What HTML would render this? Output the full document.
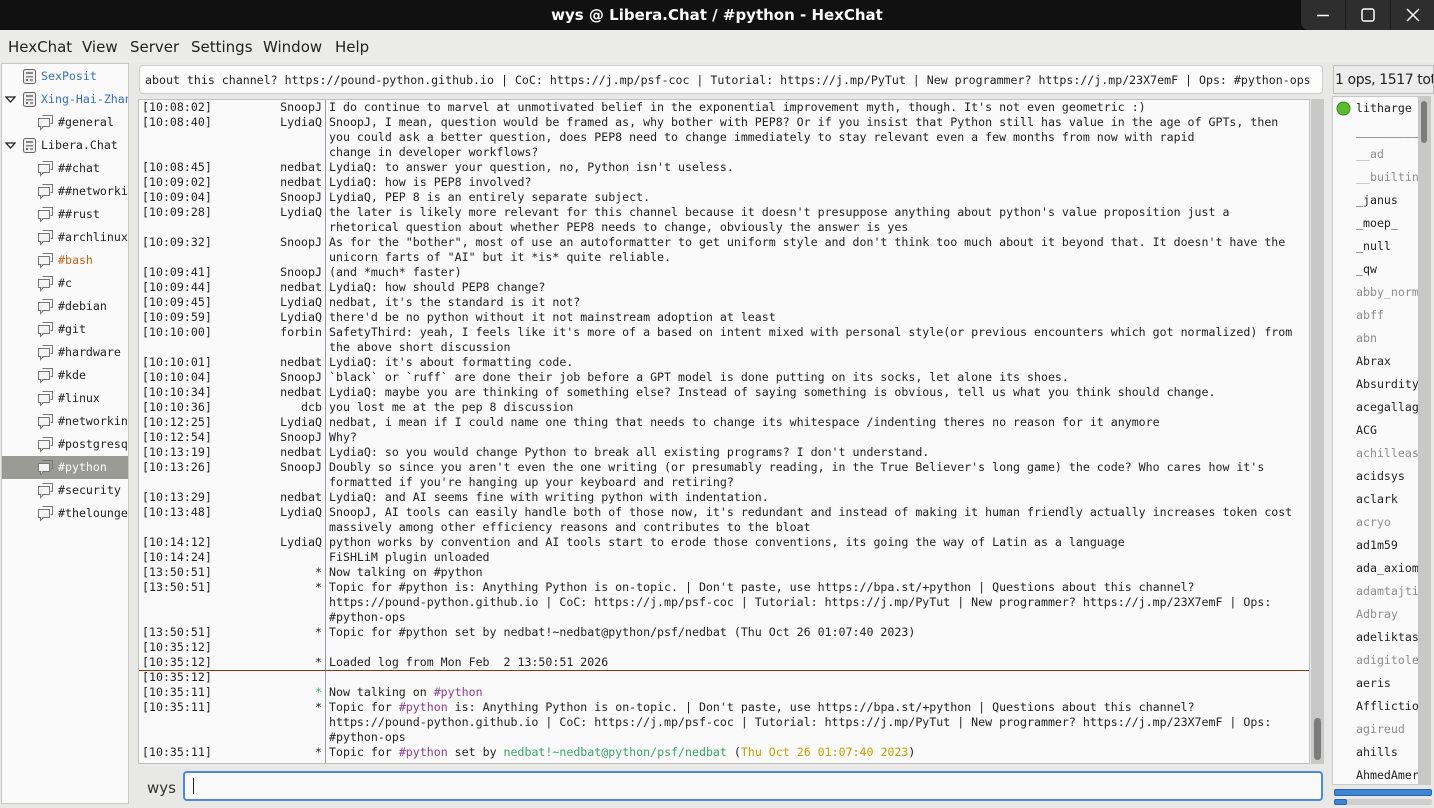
<!DOCTYPE html>
<html><head><meta charset="utf-8"><style>
*{margin:0;padding:0;box-sizing:border-box}
body{width:1434px;height:808px;overflow:hidden;background:#e8e8e7;font-family:"DejaVu Sans","Liberation Sans",sans-serif;position:relative}
.tb{position:absolute;left:0;top:0;width:1434px;height:30px;background:#111;color:#fff;font-weight:bold;font-size:15px;text-align:center;line-height:30px}
.wb{position:absolute;top:0;left:1301px;width:133px;height:30px;background:#2e2e2e;border-radius:0 0 0 8px}
.menu{position:absolute;top:30px;left:0;width:1434px;height:32px;background:#ebebea;font-size:15px;color:#222}
.menu span{position:absolute;top:8px}
.tree{position:absolute;left:1px;top:63px;width:128px;height:741px;background:#fafafa;border:1px solid #c8c8c8;overflow:hidden;font-family:"DejaVu Sans Mono","Liberation Mono",monospace;font-size:11.6px}
.tree div{position:absolute;left:0;width:126px;height:23px;line-height:23px;white-space:nowrap;color:#222}
.tree svg{position:absolute;top:3px}
.topic{position:absolute;left:139px;top:65px;width:1184px;height:29px;background:#fcfcfc;border:1px solid #cfcfcf;border-radius:4px;font-family:"DejaVu Sans Mono","Liberation Mono",monospace;font-size:11.6px;line-height:28px;padding-left:5px;white-space:nowrap;overflow:hidden;color:#222}
.chat{position:absolute;left:138px;top:99px;width:1172px;height:665px;background:#fafafa;border:1px solid #c0c0c0;overflow:hidden;font-family:"DejaVu Sans Mono","Liberation Mono",monospace;font-size:11.6px;color:#222}
.sep{position:absolute;left:186px;top:0;width:1px;height:665px;background:#9a9aa8}
.r{position:relative;display:flex;line-height:15px;min-height:15px}
.l{width:180px;position:relative;flex:none;margin-left:3px}
.l .t{position:absolute;left:0}
.l .n{position:absolute;right:0}
.m{margin-left:7px;white-space:pre}
.p{color:#8b3f8b}.g{color:#3aa56b}.y{color:#c7a000}
.vs{position:absolute;left:1311px;top:99px;width:13px;height:665px;background:#c8c8c8}
.users{position:absolute;left:1332px;top:96px;width:99px;height:689px;background:#fafafa;border:1px solid #c8c8c8;overflow:hidden;font-family:"DejaVu Sans Mono","Liberation Mono",monospace;font-size:11.6px}
.users div{position:absolute;left:23px;height:23px;line-height:23px;white-space:nowrap;color:#222}
.users .a{color:#8e8e8e}
</style></head><body>
<div class="tb">wys @ Libera.Chat / #python - HexChat</div>
<div class="wb">
<svg width="133" height="30" style="position:absolute;left:0;top:0"><rect x="44" y="0" width="1" height="30" fill="#1e1e1e"/><rect x="89" y="0" width="1" height="30" fill="#1e1e1e"/><line x1="16" y1="15.5" x2="28" y2="15.5" stroke="#fff" stroke-width="1.5"/><rect x="61" y="9" width="12" height="12" rx="2" fill="none" stroke="#fff" stroke-width="1.5"/><path d="M106 9L118 21M118 9L106 21" stroke="#fff" stroke-width="1.5"/></svg></div>
<div class="menu"><span style="left:8px">HexChat</span><span style="left:82px">View</span><span style="left:130px">Server</span><span style="left:191px">Settings</span><span style="left:263px">Window</span><span style="left:335px">Help</span></div>

<div class="tree">
<svg width="0" height="0" style="position:absolute"><defs>
<g id="sv"><rect x="1.5" y="1.5" width="12" height="14" rx="2" fill="#eee" stroke="#666"/><rect x="4" y="4" width="7" height="2" fill="#888"/><rect x="4" y="8" width="7" height="1.5" fill="#888"/><rect x="4" y="11" width="2" height="2" fill="#666"/><rect x="8" y="11" width="3" height="2" fill="#999"/></g>
<g id="ch"><path d="M5.5 1.5h10v8h-2" fill="none" stroke="#777"/><rect x="1.5" y="4.5" width="11" height="8" fill="#f4f4f4" stroke="#777"/><path d="M3.5 12.5v3l3-3" fill="#f4f4f4" stroke="#777"/></g>
</defs></svg>
<div style="top:1px"><svg style="left:20px" width="16" height="18"><use href="#sv"/></svg><span style="position:absolute;left:39px;color:#3a6fb8">SexPosit</span></div>
<div style="top:24px"><svg style="left:3px;top:8px" width="11" height="8"><path d="M1 1h9L5.5 6z" fill="none" stroke="#222" stroke-width="1.3"/></svg><svg style="left:20px" width="16" height="18"><use href="#sv"/></svg><span style="position:absolute;left:39px;color:#3a6fb8">Xing-Hai-Zhang</span></div>
<div style="top:47px"><svg style="left:35px" width="17" height="17"><use href="#ch"/></svg><span style="position:absolute;left:56px">#general</span></div>
<div style="top:70px"><svg style="left:3px;top:8px" width="11" height="8"><path d="M1 1h9L5.5 6z" fill="none" stroke="#222" stroke-width="1.3"/></svg><svg style="left:20px" width="16" height="18"><use href="#sv"/></svg><span style="position:absolute;left:39px">Libera.Chat</span></div>
<div style="top:93px"><svg style="left:35px" width="17" height="17"><use href="#ch"/></svg><span style="position:absolute;left:56px">##chat</span></div>
<div style="top:116px"><svg style="left:35px" width="17" height="17"><use href="#ch"/></svg><span style="position:absolute;left:56px">##networking</span></div>
<div style="top:139px"><svg style="left:35px" width="17" height="17"><use href="#ch"/></svg><span style="position:absolute;left:56px">##rust</span></div>
<div style="top:162px"><svg style="left:35px" width="17" height="17"><use href="#ch"/></svg><span style="position:absolute;left:56px">#archlinux</span></div>
<div style="top:185px"><svg style="left:35px" width="17" height="17"><use href="#ch"/></svg><span style="position:absolute;left:56px;color:#c5641a">#bash</span></div>
<div style="top:208px"><svg style="left:35px" width="17" height="17"><use href="#ch"/></svg><span style="position:absolute;left:56px">#c</span></div>
<div style="top:231px"><svg style="left:35px" width="17" height="17"><use href="#ch"/></svg><span style="position:absolute;left:56px">#debian</span></div>
<div style="top:254px"><svg style="left:35px" width="17" height="17"><use href="#ch"/></svg><span style="position:absolute;left:56px">#git</span></div>
<div style="top:277px"><svg style="left:35px" width="17" height="17"><use href="#ch"/></svg><span style="position:absolute;left:56px">#hardware</span></div>
<div style="top:300px"><svg style="left:35px" width="17" height="17"><use href="#ch"/></svg><span style="position:absolute;left:56px">#kde</span></div>
<div style="top:323px"><svg style="left:35px" width="17" height="17"><use href="#ch"/></svg><span style="position:absolute;left:56px">#linux</span></div>
<div style="top:346px"><svg style="left:35px" width="17" height="17"><use href="#ch"/></svg><span style="position:absolute;left:56px">#networking</span></div>
<div style="top:369px"><svg style="left:35px" width="17" height="17"><use href="#ch"/></svg><span style="position:absolute;left:56px">#postgresql</span></div>
<div style="top:392px;background:#9b9b96"><svg style="left:35px" width="17" height="17"><use href="#ch"/></svg><span style="position:absolute;left:56px;color:#fff">#python</span></div>
<div style="top:415px"><svg style="left:35px" width="17" height="17"><use href="#ch"/></svg><span style="position:absolute;left:56px">#security</span></div>
<div style="top:438px"><svg style="left:35px" width="17" height="17"><use href="#ch"/></svg><span style="position:absolute;left:56px">#thelounge</span></div>
</div>

<div class="topic">about this channel? https://pound-python.github.io | CoC: https://j.mp/psf-coc | Tutorial: https://j.mp/PyTut | New programmer? https://j.mp/23X7emF | Ops: #python-ops</div>

<div class="chat"><div class="sep"></div>
<div class="r"><div class="l"><span class="t">[10:08:02]</span><span class="n">SnoopJ</span></div><div class="m">I do continue to marvel at unmotivated belief in the exponential improvement myth, though. It's not even geometric :)</div></div>
<div class="r"><div class="l"><span class="t">[10:08:40]</span><span class="n">LydiaQ</span></div><div class="m">SnoopJ, I mean, question would be framed as, why bother with PEP8? Or if you insist that Python still has value in the age of GPTs, then
you could ask a better question, does PEP8 need to change immediately to stay relevant even a few months from now with rapid
change in developer workflows?</div></div>
<div class="r"><div class="l"><span class="t">[10:08:45]</span><span class="n">nedbat</span></div><div class="m">LydiaQ: to answer your question, no, Python isn't useless.</div></div>
<div class="r"><div class="l"><span class="t">[10:09:02]</span><span class="n">nedbat</span></div><div class="m">LydiaQ: how is PEP8 involved?</div></div>
<div class="r"><div class="l"><span class="t">[10:09:04]</span><span class="n">SnoopJ</span></div><div class="m">LydiaQ, PEP 8 is an entirely separate subject.</div></div>
<div class="r"><div class="l"><span class="t">[10:09:28]</span><span class="n">LydiaQ</span></div><div class="m">the later is likely more relevant for this channel because it doesn't presuppose anything about python's value proposition just a
rhetorical question about whether PEP8 needs to change, obviously the answer is yes</div></div>
<div class="r"><div class="l"><span class="t">[10:09:32]</span><span class="n">SnoopJ</span></div><div class="m">As for the "bother", most of use an autoformatter to get uniform style and don't think too much about it beyond that. It doesn't have the
unicorn farts of "AI" but it *is* quite reliable.</div></div>
<div class="r"><div class="l"><span class="t">[10:09:41]</span><span class="n">SnoopJ</span></div><div class="m">(and *much* faster)</div></div>
<div class="r"><div class="l"><span class="t">[10:09:44]</span><span class="n">nedbat</span></div><div class="m">LydiaQ: how should PEP8 change?</div></div>
<div class="r"><div class="l"><span class="t">[10:09:45]</span><span class="n">LydiaQ</span></div><div class="m">nedbat, it's the standard is it not?</div></div>
<div class="r"><div class="l"><span class="t">[10:09:59]</span><span class="n">LydiaQ</span></div><div class="m">there'd be no python without it not mainstream adoption at least</div></div>
<div class="r"><div class="l"><span class="t">[10:10:00]</span><span class="n">forbin</span></div><div class="m">SafetyThird: yeah, I feels like it's more of a based on intent mixed with personal style(or previous encounters which got normalized) from
the above short discussion</div></div>
<div class="r"><div class="l"><span class="t">[10:10:01]</span><span class="n">nedbat</span></div><div class="m">LydiaQ: it's about formatting code.</div></div>
<div class="r"><div class="l"><span class="t">[10:10:04]</span><span class="n">SnoopJ</span></div><div class="m">`black` or `ruff` are done their job before a GPT model is done putting on its socks, let alone its shoes.</div></div>
<div class="r"><div class="l"><span class="t">[10:10:34]</span><span class="n">nedbat</span></div><div class="m">LydiaQ: maybe you are thinking of something else? Instead of saying something is obvious, tell us what you think should change.</div></div>
<div class="r"><div class="l"><span class="t">[10:10:36]</span><span class="n">dcb</span></div><div class="m">you lost me at the pep 8 discussion</div></div>
<div class="r"><div class="l"><span class="t">[10:12:25]</span><span class="n">LydiaQ</span></div><div class="m">nedbat, i mean if I could name one thing that needs to change its whitespace /indenting theres no reason for it anymore</div></div>
<div class="r"><div class="l"><span class="t">[10:12:54]</span><span class="n">SnoopJ</span></div><div class="m">Why?</div></div>
<div class="r"><div class="l"><span class="t">[10:13:19]</span><span class="n">nedbat</span></div><div class="m">LydiaQ: so you would change Python to break all existing programs? I don't understand.</div></div>
<div class="r"><div class="l"><span class="t">[10:13:26]</span><span class="n">SnoopJ</span></div><div class="m">Doubly so since you aren't even the one writing (or presumably reading, in the True Believer's long game) the code? Who cares how it's
formatted if you're hanging up your keyboard and retiring?</div></div>
<div class="r"><div class="l"><span class="t">[10:13:29]</span><span class="n">nedbat</span></div><div class="m">LydiaQ: and AI seems fine with writing python with indentation.</div></div>
<div class="r"><div class="l"><span class="t">[10:13:48]</span><span class="n">LydiaQ</span></div><div class="m">SnoopJ, AI tools can easily handle both of those now, it's redundant and instead of making it human friendly actually increases token cost
massively among other efficiency reasons and contributes to the bloat</div></div>
<div class="r"><div class="l"><span class="t">[10:14:12]</span><span class="n">LydiaQ</span></div><div class="m">python works by convention and AI tools start to erode those conventions, its going the way of Latin as a language</div></div>
<div class="r"><div class="l"><span class="t">[10:14:24]</span><span class="n"></span></div><div class="m">FiSHLiM plugin unloaded</div></div>
<div class="r"><div class="l"><span class="t">[13:50:51]</span><span class="n">*</span></div><div class="m">Now talking on #python</div></div>
<div class="r"><div class="l"><span class="t">[13:50:51]</span><span class="n">*</span></div><div class="m">Topic for #python is: Anything Python is on-topic. | Don't paste, use https://bpa.st/+python | Questions about this channel?
https://pound-python.github.io | CoC: https://j.mp/psf-coc | Tutorial: https://j.mp/PyTut | New programmer? https://j.mp/23X7emF | Ops:
#python-ops</div></div>
<div class="r"><div class="l"><span class="t">[13:50:51]</span><span class="n">*</span></div><div class="m">Topic for #python set by nedbat!~nedbat@python/psf/nedbat (Thu Oct 26 01:07:40 2023)</div></div>
<div class="r"><div class="l"><span class="t">[10:35:12]</span><span class="n"></span></div><div class="m"></div></div>
<div class="r" style="border-bottom:1px solid #8b3a10;height:16px"><div class="l"><span class="t">[10:35:12]</span><span class="n">*</span></div><div class="m">Loaded log from Mon Feb  2 13:50:51 2026</div></div>
<div class="r" style="margin-top:-1px"><div class="l"><span class="t">[10:35:12]</span><span class="n"></span></div><div class="m"></div></div>
<div class="r"><div class="l"><span class="t">[10:35:11]</span><span class="n g">*</span></div><div class="m">Now talking on <span class="p">#python</span></div></div>
<div class="r"><div class="l"><span class="t">[10:35:11]</span><span class="n">*</span></div><div class="m">Topic for <span class="p">#python</span> is: Anything Python is on-topic. | Don't paste, use https://bpa.st/+python | Questions about this channel?
https://pound-python.github.io | CoC: https://j.mp/psf-coc | Tutorial: https://j.mp/PyTut | New programmer? https://j.mp/23X7emF | Ops:
#python-ops</div></div>
<div class="r"><div class="l"><span class="t">[10:35:11]</span><span class="n">*</span></div><div class="m">Topic for <span class="p">#python</span> set by <span class="g">nedbat!~nedbat@python/psf/nedbat</span> (<span class="y">Thu Oct 26 01:07:40 2023</span>)</div></div>
</div>
<div class="vs"><div style="position:absolute;left:3px;top:619px;width:7px;height:42px;border-radius:4px;background:#7c7c7c"></div></div>

<div style="position:absolute;left:147px;top:779px;font-size:15px;color:#333">wys</div>
<div style="position:absolute;left:183px;top:771px;width:1140px;height:30px;background:#fafafa;border:2px solid #4a8ad8;border-radius:4px"><div style="position:absolute;left:8px;top:5px;width:1px;height:16px;background:#222"></div></div>

<div style="position:absolute;left:1333px;top:65px;width:101px;height:29px;background:#ececec;border:1px solid #bdbdbd;font-size:14px;letter-spacing:-0.4px;line-height:28px;padding-left:1px;white-space:nowrap;overflow:hidden;color:#222">1 ops, 1517 total</div>
<div class="users">
<svg style="position:absolute;left:3px;top:4px" width="15" height="15"><circle cx="7.5" cy="7.5" r="6.5" fill="#5dbb2f" stroke="#3a8a1c"/></svg>
<div style="top:0">litharge</div>
<div style="top:23px">__________</div>
<div class="a" style="top:46px">__ad</div>
<div class="a" style="top:69px">__builtin</div>
<div style="top:92px">_janus</div>
<div style="top:115px">_moep_</div>
<div style="top:138px">_null</div>
<div style="top:161px">_qw</div>
<div class="a" style="top:184px">abby_norm</div>
<div class="a" style="top:207px">abff</div>
<div class="a" style="top:230px">abn</div>
<div style="top:253px">Abrax</div>
<div style="top:276px">Absurdity</div>
<div style="top:299px">acegallagher</div>
<div style="top:322px">ACG</div>
<div class="a" style="top:345px">achilleas</div>
<div style="top:368px">acidsys</div>
<div style="top:391px">aclark</div>
<div class="a" style="top:414px">acryo</div>
<div style="top:437px">ad1m59</div>
<div style="top:460px">ada_axiom</div>
<div class="a" style="top:483px">adamtajti</div>
<div class="a" style="top:506px">Adbray</div>
<div style="top:529px">adeliktas</div>
<div class="a" style="top:552px">adigitole</div>
<div style="top:575px">aeris</div>
<div style="top:598px">Affliction</div>
<div class="a" style="top:621px">agireud</div>
<div style="top:644px">ahills</div>
<div style="top:667px">AhmedAmer</div>
<div style="left:85px;top:0;width:13px;height:689px;background:#c8c8c8"><div style="position:absolute;left:3px;top:4px;width:6px;height:42px;border-radius:3px;background:#7c7c7c"></div></div>
</div>
<div style="position:absolute;left:1334px;top:789px;width:98px;height:7px;background:#3e85d3;border:1px solid #2a66ad;border-radius:2px"></div>
<div style="position:absolute;left:1334px;top:799px;width:98px;height:6px;background:#cfcfcf;border-radius:2px"><div style="width:13px;height:6px;background:#3e85d3;border:1px solid #2a66ad;border-radius:2px"></div></div>
</body></html>
